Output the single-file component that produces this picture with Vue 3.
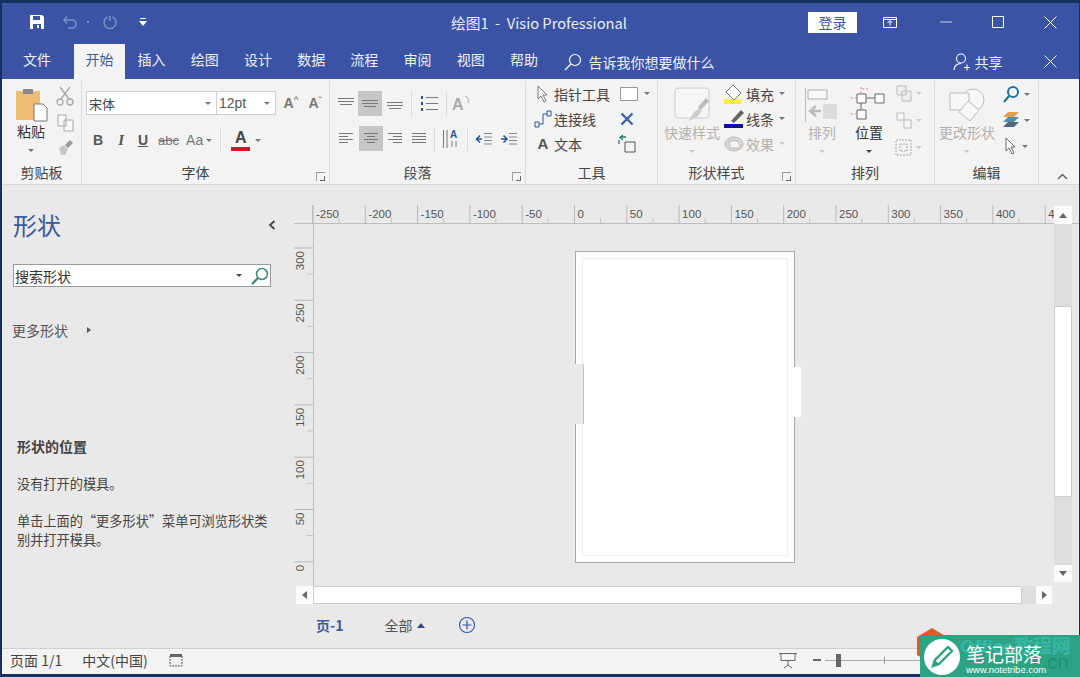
<script setup>
const menus = ['插入', '绘图', '设计', '数据', '流程', '审阅', '视图', '帮助']

const hTicks = []
for (let v = -250; v <= 450; v += 50) {
  hTicks.push({ v, x: (v + 250) * 1.046, label: v === 450 ? '4' : String(v) })
}

const vTicks = []
for (let v = 300; v >= 0; v -= 50) vTicks.push({ v, y: (300 - v) * 1.046 + 24 })
</script>

<template>
  <div class="window">
    <header class="titlebar">
      <div class="qat">
        <svg width="18" height="18" viewBox="0 0 18 18"><path d="M2 2h12l2 2v12H2z" fill="#fff"/><path d="M5 3h7v4H5zM5 11h8v5H5z" fill="#3b53a4"/><path d="M9 12h2v3H9z" fill="#fff"/></svg>
        <svg class="q-undo" width="16" height="16" viewBox="0 0 16 16" fill="none" stroke="#7a8ec8" stroke-width="1.6"><path d="M2 6h8a4 4 0 0 1 0 8H6M5 2.500 2 6l3 3.500"/></svg>
        <span class="qat-dot"></span>
        <svg class="q-redo" width="16" height="16" viewBox="0 0 16 16" fill="none" stroke="#7a8ec8" stroke-width="1.6"><path d="M10.500 3a6 6 0 1 1-5 0M8 2v5"/></svg>
        <svg class="qat-more" width="10" height="12" viewBox="0 0 10 12"><path d="M2 2h6v1H2z" fill="#fff"/><path d="M1 5h8L5 10z" fill="#fff"/></svg>
      </div>
      <div class="doc-title">绘图1&nbsp; -&nbsp; Visio Professional</div>
      <button class="login">登录</button>
      <svg class="win-opt" width="16" height="13" viewBox="0 0 16 13" fill="none" stroke="#fff"><path d="M1.500 1.500h13v10h-13zM1.500 3.500h13"/><path d="M8 9.500V5M5.500 7 8 4.500 10.500 7"/></svg>
      <svg class="win-min" width="12" height="12" viewBox="0 0 12 12" stroke="#c8d2ee"><path d="M0 6h12"/></svg>
      <svg class="win-max" width="12" height="12" viewBox="0 0 12 12" fill="none" stroke="#fff"><path d="M.5.500h11v11H.5z"/></svg>
      <svg class="win-close" width="13" height="13" viewBox="0 0 13 13" stroke="#fff"><path d="M.5.500l12 12M12.500.500l-12 12"/></svg>
    </header>

    <nav class="tabbar">
      <span class="tab file">文件</span>
      <span class="tab active">开始</span>
      <span v-for="m in menus" :key="m" class="tab">{{ m }}</span>
      <svg class="tell-icon" width="18" height="18" viewBox="0 0 18 18" fill="none" stroke="#fff" stroke-width="1.200"><circle cx="11" cy="7" r="5.500"/><path d="M7 11l-6 6"/></svg>
      <span class="tell">告诉我你想要做什么</span>
      <svg class="share-icon" width="19" height="18" viewBox="0 0 19 18" fill="none" stroke="#fff" stroke-width="1.100"><circle cx="8" cy="5.500" r="4.500"/><path d="M1 17c0-4 3-6.500 7-6.500M11 14.500h6M14 11.500v6"/></svg>
      <span class="share">共享</span>
      <svg class="tab-close" width="13" height="13" viewBox="0 0 13 13" stroke="#fff"><path d="M.5.500l12 12M12.500.500l-12 12"/></svg>
    </nav>

    <section class="ribbon">
      <div class="group g-clip">
        <div class="group-body">
          <div class="big paste">
            <svg width="33" height="35" viewBox="0 0 33 35"><path d="M1 4h24v29H1z" fill="#eebd72"/><path d="M8 2h10v5H8z" fill="#888"/><path d="M19 17h9l4 4v13H19z" fill="#fff" stroke="#777"/></svg>
            <span>粘贴</span>
            <i class="caret"></i>
          </div>
          <div class="small-col">
            <svg width="18" height="20" viewBox="0 0 18 20" fill="none" stroke="#a8a8a8" stroke-width="1.300"><path d="M4 1l9 12M14 1L5 13"/><circle cx="4" cy="16" r="3"/><circle cx="14" cy="16" r="3"/></svg>
            <svg width="17" height="18" viewBox="0 0 17 18" fill="#f8f8f8" stroke="#a8a8a8"><path d="M1 1h8v11H1zM7 6h9v11H7z"/></svg>
            <svg width="18" height="17" viewBox="0 0 18 17"><path d="M9 6l5-5 3 3-5 5z" fill="#999"/><path d="M3 9l5-3 4 4-3 6H5z" fill="#c8c8c8"/></svg>
          </div>
        </div>
        <div class="group-label">剪贴板</div>
      </div>

      <div class="group g-font">
        <div class="group-body col">
          <div class="font-row">
            <div class="combo font-name"><span class="songti">宋体</span><i class="caret"></i></div>
            <div class="combo font-size"><span>12pt</span><i class="caret"></i></div>
            <span class="grow-a">A<sup>^</sup></span>
            <span class="grow-a shrink">A<sup>ˇ</sup></span>
          </div>
          <div class="font-row second">
            <b class="fmt">B</b>
            <i class="fmt ital">I</i>
            <u class="fmt under">U</u>
            <s class="fmt strike">abc</s>
            <span class="fmt aa">Aa</span><i class="caret"></i>
            <span class="vsep"></span>
            <span class="color-a">A</span><i class="caret"></i>
          </div>
        </div>
        <div class="group-label shifted">字体<span class="launcher"></span></div>
      </div>

      <div class="group g-para">
        <div class="group-body col">
          <div class="para-row">
            <svg class="ic" width="18" height="14" viewBox="0 0 18 14" stroke="#777"><path d="M1 1.500h16M1 4.500h16M3 7.500h12"/></svg>
            <span class="on"><svg width="18" height="14" viewBox="0 0 18 14" stroke="#777"><path d="M1 3.500h16M1 6.500h16M3 9.500h12"/></svg></span>
            <svg class="ic" width="18" height="14" viewBox="0 0 18 14" stroke="#777"><path d="M1 5.500h16M1 8.500h16M3 11.500h12"/></svg>
            <span class="vsep"></span>
            <svg class="ic list" width="20" height="17" viewBox="0 0 20 17" stroke="#777"><path d="M7 2.500h12M7 8.500h12M7 14.500h12"/><path d="M2 1h2v3H2zM2 7h2v3H2zM2 13h2v3H2z" fill="#2b579a" stroke="none"/></svg>
            <span class="vsep"></span>
            <svg class="ic aa-rot" width="22" height="20" viewBox="0 0 22 20"><text x="1" y="16" font-family="Liberation Sans, sans-serif" font-weight="700" font-size="16" fill="#aaa">A</text><path d="M14 2c3 1 4 4 3 7" fill="none" stroke="#aaa"/></svg>
          </div>
          <div class="para-row second">
            <svg class="ic" width="16" height="13" viewBox="0 0 16 13" stroke="#777"><path d="M1 1.500h14M1 4.500h9M1 7.500h14M1 10.500h9"/></svg>
            <span class="on"><svg width="16" height="13" viewBox="0 0 16 13" stroke="#777"><path d="M1 1.500h14M4 4.500h8M1 7.500h14M4 10.500h8"/></svg></span>
            <svg class="ic" width="16" height="13" viewBox="0 0 16 13" stroke="#777"><path d="M1 1.500h14M6 4.500h9M1 7.500h14M6 10.500h9"/></svg>
            <svg class="ic just" width="16" height="13" viewBox="0 0 16 13" stroke="#777"><path d="M1 1.500h14M1 4.500h14M1 7.500h14M1 10.500h14"/></svg>
            <span class="vsep"></span>
            <svg class="ic" width="18" height="20" viewBox="0 0 18 20"><path d="M1.500 1v18M5 1v18" stroke="#777"/><text x="8" y="9" font-family="Liberation Sans, sans-serif" font-size="10" font-weight="700" fill="#2b579a">A</text><path d="M10 12v6M14 12v6" stroke="#777"/></svg>
            <span class="vsep"></span>
            <svg class="ic" width="18" height="14" viewBox="0 0 18 14" stroke="#888"><path d="M9 1.500h8M9 5h8M9 8.500h8M9 12h8"/><path d="M7 7H2M5 3.500 1.500 7 5 10.500" stroke="#2b579a" stroke-width="1.600" fill="none"/></svg>
            <svg class="ic indent" width="18" height="14" viewBox="0 0 18 14" stroke="#888"><path d="M9 1.500h8M9 5h8M9 8.500h8M9 12h8"/><path d="M1 7h5M3.500 3.500 7 7l-3.500 3.500" stroke="#2b579a" stroke-width="1.600" fill="none"/></svg>
          </div>
        </div>
        <div class="group-label shifted">段落<span class="launcher"></span></div>
      </div>

      <div class="group g-tools">
        <div class="group-body col">
          <div class="tool-row">
            <svg width="14" height="18" viewBox="0 0 14 18" fill="#fff" stroke="#777"><path d="M2 1v13l3-3 3 6 2-1-3-6h4z"/></svg>
            <span>指针工具</span>
            <svg class="tail" width="18" height="14" viewBox="0 0 18 14" fill="#fff" stroke="#999"><path d="M.5.500h17v13H.5z"/></svg>
            <i class="caret"></i>
          </div>
          <div class="tool-row">
            <svg width="18" height="18" viewBox="0 0 18 18" fill="none" stroke="#2b579a"><path d="M1 12h4v5H1zM13 1h4v5h-4zM5 14h4V4h4"/></svg>
            <span>连接线</span>
            <svg class="tail far" width="14" height="14" viewBox="0 0 14 14" stroke="#3a64a8" stroke-width="2.400"><path d="M1.500 1.500l11 11M12.500 1.500l-11 11"/></svg>
          </div>
          <div class="tool-row">
            <b class="tool-a">A</b>
            <span>文本</span>
            <svg class="tail farther" width="20" height="20" viewBox="0 0 20 20" fill="none" stroke="#555"><path d="M8 8h10v10H8z"/><path d="M9 3H4M6 1 3 3.500 6 6M2 6v4" stroke="#2b7a78" stroke-width="1.300"/></svg>
          </div>
        </div>
        <div class="group-label">工具</div>
      </div>

      <div class="group g-style">
        <div class="group-body">
          <div class="big gray quick">
            <svg width="36" height="36" viewBox="0 0 36 36"><path d="M4 1h28a3 3 0 0 1 3 3v24a3 3 0 0 1-3 3H4a3 3 0 0 1-3-3V4a3 3 0 0 1 3-3z" fill="#f6f6f6" stroke="#ccc"/><path d="M15 34l4-8 6-5 3 3-5 6z" fill="#cfcfcf"/><path d="M24 20l8-9 3 3-8 9z" fill="#bbb"/></svg>
            <span>快速样式</span>
            <i class="caret"></i>
          </div>
          <div class="style-col">
            <div class="style-row">
              <svg width="22" height="20" viewBox="0 0 22 20"><path d="M1 15h17v5H1z" fill="#f7ee40"/><path d="M10 1l8 8-7 7-8-8z" fill="#fff" stroke="#777"/></svg>
              <span>填充</span><i class="caret"></i>
            </div>
            <div class="style-row">
              <svg width="22" height="20" viewBox="0 0 22 20"><path d="M1 15h19v4H1z" fill="#10109a"/><path d="M8 12l10-11 3 3-10 10z" fill="#666"/></svg>
              <span>线条</span><i class="caret"></i>
            </div>
            <div class="style-row gray">
              <svg width="22" height="18" viewBox="0 0 22 18"><ellipse cx="11" cy="9" rx="9" ry="7" fill="#d8d8d8" stroke="#bbb"/><path d="M6 6h9l3 7H7z" fill="#f4f4f4" stroke="#bbb"/></svg>
              <span>效果</span><i class="caret"></i>
            </div>
          </div>
        </div>
        <div class="group-label shifted">形状样式<span class="launcher"></span></div>
      </div>

      <div class="group g-arrange">
        <div class="group-body">
          <div class="big gray arr">
            <svg width="34" height="36" viewBox="0 0 34 36"><path d="M.5 1v34" stroke="#bbb"/><path d="M3 3h19v9H3z" fill="#f8f8f8" stroke="#aaa"/><path d="M18 17h14v15H18z" fill="#dcdcdc"/><path d="M16 24H6M11 19l-6 5 6 5" fill="none" stroke="#bbb" stroke-width="2.500"/></svg>
            <span>排列</span>
            <i class="caret"></i>
          </div>
          <div class="big pos">
            <svg width="36" height="36" viewBox="0 0 36 36" fill="#fff" stroke="#666"><path d="M6 7h9v9H6zM24 7h9v9h-9zM6 23h9v9H6z"/><path d="M15 11h9M10 16v7" fill="none"/><path d="M10 0v7M0 11h6M0 27h6M17 2h-7" fill="none" stroke="#d28c8c" stroke-dasharray="2 2"/></svg>
            <span>位置</span>
            <i class="caret dark"></i>
          </div>
          <div class="small-col arr-col">
            <div><svg width="16" height="17" viewBox="0 0 16 17" fill="#eee" stroke="#bbb"><path d="M1 1h9v9H1zM6 6h9v10H6z"/></svg><i class="caret light"></i></div>
            <div><svg width="16" height="17" viewBox="0 0 16 17" fill="#f8f8f8" stroke="#bbb"><path d="M1 1h7v7H1zM8 8h7v8H8z"/></svg><i class="caret light"></i></div>
            <div><svg width="17" height="17" viewBox="0 0 17 17" fill="none" stroke="#aaa" stroke-dasharray="2 1"><path d="M1 1h15v15H1zM5 5h7v7H5z"/></svg><i class="caret light"></i></div>
          </div>
        </div>
        <div class="group-label">排列</div>
      </div>

      <div class="group g-edit">
        <div class="group-body">
          <div class="big gray change">
            <svg width="36" height="36" viewBox="0 0 36 36" fill="#f7f7f7" stroke="#bbb"><circle cx="24" cy="13" r="11"/><path d="M1 6h19v17H1z"/><path d="M19 14l11 9-9 11-11-9z"/></svg>
            <span>更改形状</span>
            <i class="caret"></i>
          </div>
          <div class="small-col edit-col">
            <div><svg width="18" height="18" viewBox="0 0 18 18" fill="none"><circle cx="11" cy="7" r="5" stroke="#1f6fa8" stroke-width="2"/><path d="M7 11l-5 6" stroke="#1c7a72" stroke-width="2"/></svg><i class="caret"></i></div>
            <div><svg width="18" height="18" viewBox="0 0 18 18"><path d="M6 1h11l-5 5H1z" fill="#e0a050"/><path d="M6 6h11l-5 5H1z" fill="#5a8aa0"/><path d="M6 11h11l-5 5H1z" fill="#52667a"/></svg><i class="caret"></i></div>
            <div><svg width="14" height="18" viewBox="0 0 14 18" fill="#fff" stroke="#666"><path d="M2 1v13l3-3 3 6 2-1-3-6h4z"/></svg><i class="caret"></i></div>
          </div>
        </div>
        <div class="group-label">编辑</div>
      </div>

      <div class="collapse">
        <svg width="11" height="7" viewBox="0 0 11 7" fill="none" stroke="#666" stroke-width="1.500"><path d="M1 6l4.500-4.500L10 6"/></svg>
      </div>
    </section>

    <main class="body">
      <aside class="panel">
        <div class="panel-head">
          <h1>形状</h1>
          <svg width="8" height="10" viewBox="0 0 8 10" fill="none" stroke="#444" stroke-width="1.800"><path d="M6.500 1 2 5l4.500 4"/></svg>
        </div>
        <div class="search">
          <span>搜索形状</span>
          <i class="caret dark"></i>
          <svg width="20" height="20" viewBox="0 0 20 20" fill="none"><circle cx="12" cy="8" r="5.500" stroke="#3a8a80" stroke-width="1.500"/><path d="M8 12l-6 6" stroke="#2f7d72" stroke-width="2"/></svg>
        </div>
        <div class="more"><span>更多形状</span><i class="arrow-r"></i></div>
        <div class="place">
          <h2>形状的位置</h2>
          <p>没有打开的模具。</p>
          <p>单击上面的“更多形状”菜单可浏览形状类别并打开模具。</p>
        </div>
      </aside>

      <div class="work">
        <div class="hruler-row">
          <div class="ruler-corner"></div>
          <svg class="hruler" width="741" height="18" viewBox="0 0 741 18">
            <g v-for="t in hTicks" :key="t.v">
              <path :d="`M${t.x} 0V18`" stroke="#b8b8b8"/>
              <path :d="`M${t.x + 26} 13V18`" stroke="#c4c4c4"/>
              <text :x="t.x + 3" y="13">{{ t.label }}</text>
            </g>
          </svg>
          <button class="sb-btn up"><i class="tri-up"></i></button>
        </div>
        <div class="canvas-row">
          <svg class="vruler" width="19" height="362" viewBox="0 0 19 362">
            <g v-for="t in vTicks" :key="t.v">
              <path :d="`M0 ${t.y}H19`" stroke="#b8b8b8"/>
              <path v-if="t.v" :d="`M13 ${t.y + 26}H19`" stroke="#c4c4c4"/>
              <text text-anchor="end" :transform="`translate(10 ${t.y + 3}) rotate(-90)`">{{ t.v }}</text>
            </g>
          </svg>
          <div class="canvas">
            <div class="page">
              <div class="page-inner"></div>
            </div>
          </div>
          <div class="vscroll">
            <div class="track t1"></div>
            <div class="thumb"></div>
            <div class="track t2"></div>
            <button class="sb-btn down"><i class="tri-down"></i></button>
          </div>
        </div>
        <div class="hscroll">
          <button class="sb-btn left"><i class="tri-left"></i></button>
          <div class="hthumb"></div>
          <div class="htrack"></div>
          <button class="sb-btn right"><i class="tri-right"></i></button>
        </div>
        <div class="pages">
          <span class="page-tab">页-1</span>
          <span class="all">全部</span><i class="tri-up blue"></i>
          <svg class="add" width="18" height="18" viewBox="0 0 18 18" fill="none" stroke="#3c5a9e" stroke-width="1.200"><circle cx="9" cy="9" r="7.500"/><path d="M9 4.500v9M4.500 9h9"/></svg>
        </div>
      </div>
    </main>

    <footer class="status">
      <span class="s-page">页面 1/1</span>
      <span class="s-lang">中文(中国)</span>
      <svg class="s-macro" width="14" height="14" viewBox="0 0 14 14"><path d="M1 3h12v10H1z" fill="#f2f2f2" stroke="#555" stroke-dasharray="2 1"/><path d="M1 1h12v3H1z" fill="#666"/></svg>
      <svg class="s-present" width="20" height="17" viewBox="0 0 20 17" fill="none" stroke="#666"><path d="M1 1.500h18M3 1.500v7h14v-7M10 8.500V13M6 16l4-3 4 3"/></svg>
      <span class="zoom-minus"></span>
      <div class="zoom-track"><span class="zoom-thumb"></span><span class="zoom-mid"></span></div>
    </footer>

    <div class="mark-hex"></div>
    <div class="mark">
      <span class="mark-bg">Office教程网</span>
      <span class="mark-cn">.cn</span>
      <span class="mark-circle">
        <svg width="26" height="26" viewBox="0 0 26 26"><path d="M19 3l4 4L10 20l-6 2 2-6z" fill="none" stroke="#2da384" stroke-width="2.400"/><path d="M6 16l4 4-6 2z" fill="#2da384"/></svg>
      </span>
      <div class="mark-text">
        <strong>笔记部落</strong>
        <small>www.notetribe.com</small>
      </div>
    </div>
  </div>
</template>

<style>
html, body {
  margin: 0;
  background: #16315f;
}
</style>

<style scoped>
.window {
  position: relative;
  width: 1080px;
  height: 677px;
  box-sizing: border-box;
  padding: 3px 1px 3px 2px;
  background: #16315f;
  overflow: hidden;
  display: flex;
  flex-direction: column;
  font-family: "Noto Sans CJK SC", "Liberation Sans", sans-serif;
  font-size: 14px;
  color: #444;
}

button {
  padding: 0;
  font: inherit;
  border: 0;
}

.caret {
  display: inline-block;
  width: 0;
  height: 0;
  border-left: 3px solid transparent;
  border-right: 3px solid transparent;
  border-top: 3px solid #777;
}
.caret.dark { border-top-color: #444; }
.caret.light { border-top-color: #ccc; }

/* title bar */
.titlebar {
  height: 41px;
  flex: none;
  display: flex;
  align-items: center;
  box-sizing: border-box;
  padding-bottom: 3px;
  background: #3b53a4;
  color: #e8ecf8;
}
.qat {
  width: 200px;
  display: flex;
  align-items: center;
  padding-left: 26px;
  box-sizing: border-box;
}
.q-undo { margin-left: 16px; }
.qat-dot {
  width: 2px;
  height: 2px;
  margin-left: 9px;
  background: #7a8ec8;
}
.q-redo { margin-left: 13px; }
.qat-more { margin-left: 20px; }
.doc-title {
  width: 360px;
  margin-left: 249px;
  font-size: 14.700px;
  white-space: pre;
}
.login {
  width: 49px;
  height: 21px;
  margin-left: -3px;
  background: #fff;
  color: #3b53a4;
  font-size: 14px;
  line-height: 21px;
}
.win-opt { margin-left: 25px; }
.win-min { margin-left: 42px; }
.win-max { margin-left: 40px; }
.win-close { margin-left: 40px; }

/* tabs */
.tabbar {
  height: 35px;
  flex: none;
  display: flex;
  align-items: center;
  background: #3b53a4;
  color: #eef1fa;
}
.tab {
  width: 53.200px;
  text-align: center;
  line-height: 31px;
  height: 35px;
  flex: none;
}
.tab.file {
  width: 72px;
  text-align: left;
  padding-left: 21px;
  box-sizing: border-box;
}
.tab.active {
  width: 51px;
  background: #f3f3f3;
  color: #4a5a90;
}
.tell-icon { margin-left: 13px; }
.tell { margin-left: 7px; width: 364px; flex: none; }
.share { margin-left: 3px; }
.tab-close { margin-left: 41px; }

/* ribbon */
.ribbon {
  height: 106px;
  flex: none;
  display: flex;
  background: #f3f3f3;
  border-bottom: 1px solid #d6d6d6;
  box-sizing: border-box;
  color: #444;
}
.group {
  position: relative;
  flex: none;
  display: flex;
  flex-direction: column;
  box-sizing: border-box;
  border-right: 1px solid #dcdcdc;
  margin-top: 2px;
}
.group-body {
  flex: 1;
  display: flex;
  min-height: 0;
}
.group-body.col { flex-direction: column; }
.group-label {
  height: 22px;
  line-height: 20px;
  text-align: center;
  font-size: 14px;
  position: relative;
}
.group-label.shifted { padding-right: 20px; }
.launcher {
  position: absolute;
  right: 4px;
  bottom: 3px;
  width: 8px;
  height: 8px;
  border-left: 1px solid #999;
  border-top: 1px solid #999;
}
.launcher::after {
  content: "";
  position: absolute;
  right: 0;
  bottom: 0;
  width: 4px;
  height: 4px;
  border-right: 1px solid #666;
  border-bottom: 1px solid #666;
}

.big {
  display: flex;
  flex-direction: column;
  align-items: center;
  padding-top: 6px;
  box-sizing: border-box;
  flex: none;
}
.big span { line-height: 22px; margin-top: -2px; white-space: nowrap; }
.big .caret { margin-top: 7px; }
.big.gray { color: #b0b0b0; }
.big.gray .caret { border-top-color: #ccc; }

.small-col {
  display: flex;
  flex-direction: column;
  justify-content: space-between;
  align-items: center;
  padding: 4px 0 6px;
}

.g-clip { width: 80px; }
.paste { width: 42px; margin-left: 8px; }
.paste span { color: #333; }
.g-clip .small-col { width: 20px; margin-left: 3px; padding-top: 5px; }

.g-font { width: 248px; }
.font-row {
  display: flex;
  align-items: center;
  height: 26px;
  margin-top: 9px;
  padding-left: 4px;
}
.font-row.second {
  margin-top: 11px;
  padding-left: 11px;
}
.combo {
  height: 24px;
  box-sizing: border-box;
  background: #fff;
  border: 1px solid #cfcfcf;
  display: flex;
  align-items: center;
  justify-content: space-between;
  padding: 0 5px 0 2px;
  font-size: 13px;
}
.font-name { width: 131px; }
.font-size { width: 60px; margin-left: -1px; font-family: "Liberation Sans", sans-serif; font-size: 14px; color: #555; }
.songti { font-family: "Noto Sans CJK SC", sans-serif; }
.grow-a {
  width: 24px;
  margin-left: 3px;
  text-align: center;
  font: 700 14px "Liberation Sans", sans-serif;
  color: #777;
  white-space: nowrap;
}
.grow-a sup { font-size: 8px; vertical-align: 6px; line-height: 0; }
.grow-a.shrink { margin-left: 0; }
.fmt {
  font-family: "Liberation Sans", sans-serif;
  text-align: center;
  color: #555;
}
.fmt.ital { font-family: "Liberation Serif", serif; font-weight: 700; font-size: 15px; margin-left: 15px; }
.fmt.under { font-weight: 700; margin-left: 14px; }
.fmt.strike { font-size: 13px; margin-left: 10px; color: #777; }
.fmt.aa { font-size: 14px; margin-left: 7px; color: #777; margin-right: 3px; }
.vsep {
  width: 1px;
  height: 24px;
  background: #d8d8d8;
  flex: none;
}
.font-row.second .vsep { margin: 0 10px 0 8px; }
.color-a {
  font: 700 16px/18px "Liberation Sans", sans-serif;
  color: #444;
  border-bottom: 4px solid #c41c24;
  width: 19px;
  text-align: center;
  margin-right: 5px;
}

.g-para { width: 196px; }
.para-row {
  display: flex;
  align-items: center;
  height: 25px;
  margin-top: 10px;
  padding-left: 7px;
}
.para-row.second { margin-top: 10px; padding-left: 8px; }
.on {
  width: 24px;
  height: 25px;
  margin: 0 4px 0 3px;
  background: #c6c6c6;
  display: flex;
  align-items: center;
  justify-content: center;
  flex: none;
}
.para-row.second .on { margin: 0 4px 0 5px; }
.para-row .vsep { margin: 0 7px; }
.ic.just { margin-left: 8px; }
.ic.aa-rot { margin-left: -3px; }
.ic.indent { margin-left: 7px; }

.g-tools { width: 132px; }
.tool-row {
  height: 25px;
  display: flex;
  align-items: center;
  padding-left: 8px;
  color: #444;
}
.tool-row > svg:first-child { width: 18px; flex: none; }
.tool-row span { margin-left: 2px; font-size: 14px; }
.tool-a {
  width: 18px;
  text-align: center;
  font: 700 15px "Liberation Sans", sans-serif;
  color: #555;
}
.tail { margin-left: 10px; margin-right: 6px; }
.tail.far { margin-left: 24px; }
.tail.farther { margin-left: 35px; }

.g-style { width: 138px; }
.quick { width: 58px; margin-left: 5px; }
.style-col {
  margin-left: 2px;
}
.style-row {
  height: 25px;
  display: flex;
  align-items: center;
  gap: 1px;
}
.style-row .caret { margin-left: 4px; }
.style-row.gray { color: #b0b0b0; }
.style-row.gray .caret { border-top-color: #ccc; }

.g-arrange { width: 139px; }
.arr { width: 34px; margin-left: 9px; }
.pos { width: 36px; margin-left: 12px; color: #333; }
.arr-col { margin-left: 8px; }
.arr-col div, .edit-col div {
  display: flex;
  align-items: center;
  gap: 4px;
}

.g-edit { width: 104px; }
.change { width: 58px; margin-left: 3px; }
.edit-col { margin-left: 6px; padding: 4px 0 7px; }

.collapse {
  flex: 1;
  display: flex;
  justify-content: flex-end;
  align-items: flex-end;
  padding: 0 11px 4px 0;
}

/* main */
.body {
  flex: 1;
  min-height: 0;
  display: flex;
  background: #e9e9e9;
}
.panel {
  width: 292px;
  flex: none;
  box-sizing: border-box;
  padding: 0 0 0 11px;
}
.panel-head {
  height: 79px;
  display: flex;
  align-items: center;
  justify-content: space-between;
  padding-right: 18px;
  box-sizing: border-box;
}
.panel-head h1 {
  margin: 0;
  font-size: 24px;
  font-weight: 400;
  color: #3c5a9e;
  line-height: 80px;
}
.search {
  width: 258px;
  height: 23px;
  box-sizing: border-box;
  border: 1px solid #999;
  background: #fff;
  display: flex;
  align-items: center;
  color: #333;
  font-size: 14px;
  padding-left: 1px;
}
.search span { flex: 1; }
.search .caret { margin-right: 8px; }
.more {
  display: flex;
  align-items: center;
  margin-top: 32px;
  margin-left: -1px;
  color: #555;
  line-height: 22px;
}
.arrow-r {
  width: 0;
  height: 0;
  margin-left: 19px;
  border-top: 3px solid transparent;
  border-bottom: 3px solid transparent;
  border-left: 4px solid #555;
}
.place {
  margin-top: 96px;
  padding-left: 4px;
  width: 256px;
  font-size: 13.200px;
  line-height: 19px;
  color: #444;
}
.place h2 {
  margin: 0;
  font-size: 14px;
  font-weight: 700;
  line-height: 19px;
}
.place p { margin: 18px 0 0; }

.work {
  flex: 1;
  min-width: 0;
  display: flex;
  flex-direction: column;
  padding-top: 20px;
}
.hruler-row {
  display: flex;
  height: 19px;
  flex: none;
  border-bottom: 1px solid #bdbdbd;
  box-sizing: border-box;
}
.ruler-corner { width: 19px; flex: none; border-right: 1px solid #bdbdbd; box-sizing: border-box; }
.hruler { flex: none; }
.hruler text, .vruler text {
  font: 11.500px "Liberation Sans", sans-serif;
  fill: #555;
}
.sb-btn {
  width: 18px;
  height: 18px;
  flex: none;
  background: #fbfbfb;
  display: flex;
  align-items: center;
  justify-content: center;
}
.sb-btn.up { margin-top: 1px; }
.tri-up, .tri-down, .tri-left, .tri-right {
  width: 0;
  height: 0;
  display: block;
}
.tri-up { border: 4px solid transparent; border-top: 0; border-bottom: 5px solid #666; }
.tri-up.blue { display: inline-block; margin-left: 5px; border-bottom-color: #2f4f7f; }
.tri-down { border: 4px solid transparent; border-bottom: 0; border-top: 5px solid #666; }
.tri-left { border: 4px solid transparent; border-left: 0; border-right: 5px solid #666; }
.tri-right { border: 4px solid transparent; border-right: 0; border-left: 5px solid #666; }

.canvas-row {
  height: 361px;
  flex: none;
  display: flex;
}
.vruler {
  flex: none;
  border-right: 1px solid #bdbdbd;
}
.canvas {
  width: 740px;
  flex: none;
  padding: 27px 0 0 261px;
  box-sizing: border-box;
}
.page {
  position: relative;
  width: 220px;
  height: 312px;
  box-sizing: border-box;
  background: #fff;
  border: 1px solid #a8a8a8;
  padding: 6px;
}
.page-inner {
  height: 100%;
  box-sizing: border-box;
  border: 1px solid #eeeeee;
}
.page::before, .page::after {
  content: "";
  position: absolute;
}
.page::before {
  left: -1px;
  top: 112px;
  width: 8px;
  height: 60px;
  background: #e9e9e9;
  border-right: 1px solid #c4c4c4;
}
.page::after {
  right: -7px;
  top: 115px;
  width: 7px;
  height: 50px;
  background: #fff;
}

.vscroll {
  width: 18px;
  display: flex;
  flex-direction: column;
  flex: none;
}
.track { background: #dddddd; flex: none; }
.t1 { height: 82px; }
.thumb { height: 191px; background: #fff; border: 1px solid #ccc; box-sizing: border-box; flex: none; }
.t2 { height: 68px; }
.sb-btn.down { height: 17px; margin-top: 0; }

.hscroll {
  height: 18px;
  margin-top: 1px;
  display: flex;
  flex: none;
  padding-left: 2px;
}
.sb-btn.left { width: 17px; }
.hthumb {
  width: 709px;
  background: #fff;
  border: 1px solid #cfcfcf;
  box-sizing: border-box;
  flex: none;
}
.htrack { width: 14px; background: #dedede; flex: none; }
.sb-btn.right { width: 16px; }

.pages {
  flex: 1;
  display: flex;
  align-items: center;
  font-size: 14px;
  padding: 0 0 2px 22px;
}
.page-tab { font-weight: 700; color: #3c5a9e; }
.all { margin-left: 41px; color: #555; }
.add { margin-left: 33px; }

/* status bar */
.status {
  height: 26px;
  flex: none;
  display: flex;
  align-items: center;
  background: #f3f3f3;
  border-top: 1px solid #d0d0d0;
  box-sizing: border-box;
  padding-bottom: 3px;
  color: #444;
  font-size: 14px;
}
.s-page { margin-left: 8px; }
.s-lang { margin-left: 20px; }
.s-macro { margin-left: 21px; }
.s-present { margin-left: 595px; }
.zoom-minus {
  width: 8px;
  height: 2px;
  margin-left: 15px;
  background: #666;
}
.zoom-track {
  position: relative;
  width: 100px;
  height: 1px;
  margin-left: 4px;
  background: #aaa;
}
.zoom-thumb {
  position: absolute;
  left: 11px;
  top: -6px;
  width: 5px;
  height: 13px;
  background: #666;
}
.zoom-mid {
  position: absolute;
  left: 59px;
  top: -3px;
  width: 1px;
  height: 7px;
  background: #999;
}

/* watermark over the window */
.mark-hex {
  position: absolute;
  left: 917px;
  top: 628px;
  width: 30px;
  height: 36px;
  background: #d9601f;
  clip-path: polygon(50% 0, 100% 25%, 100% 75%, 50% 100%, 0 75%, 0 25%);
}
.mark {
  position: absolute;
  left: 920px;
  top: 635px;
  width: 160px;
  height: 42px;
  background: #2da384;
  color: #fff;
  display: flex;
  align-items: center;
  overflow: hidden;
}
.mark-bg {
  position: absolute;
  left: 40px;
  top: -4px;
  color: #38b6a6;
  font: 700 19px "Liberation Sans", "Noto Sans CJK SC", sans-serif;
  white-space: nowrap;
}
.mark-cn {
  position: absolute;
  left: 122px;
  top: 16px;
  color: #1f8f72;
  font: 20px "Liberation Sans", sans-serif;
}
.mark-circle {
  position: relative;
  width: 36px;
  height: 36px;
  margin: 2px 0 0 4px;
  border-radius: 50%;
  background: #fff;
  display: flex;
  align-items: center;
  justify-content: center;
  flex: none;
}
.mark-text {
  position: relative;
  margin: 5px 0 0 6px;
  display: flex;
  flex-direction: column;
  align-items: flex-start;
}
.mark-text strong {
  font-size: 19px;
  font-weight: 400;
  line-height: 22px;
  white-space: nowrap;
}
.mark-text small {
  font: 9.500px/10px "Liberation Sans", sans-serif;
  white-space: nowrap;
}
</style>
